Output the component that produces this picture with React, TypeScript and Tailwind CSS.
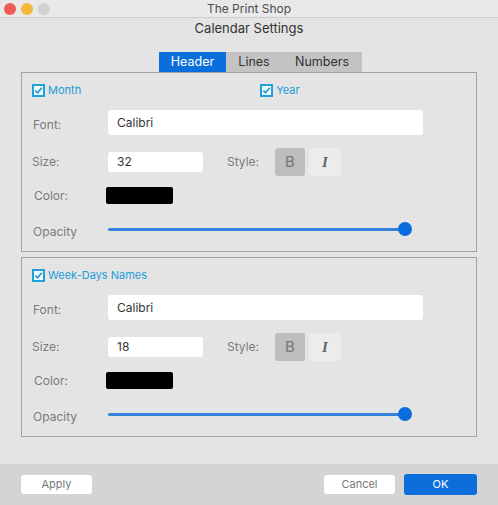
import { useState } from "react";

type Section = {
  id: string;
  checks: { label: string; offset?: string }[];
  font: string;
  size: string;
};

const sections: Section[] = [
  { id: "header", checks: [{ label: "Month" }, { label: "Year", offset: "ml-[179px]" }], font: "Calibri", size: "32" },
  { id: "week", checks: [{ label: "Week-Days Names" }], font: "Calibri", size: "18" },
];

function CheckBox({ label }: { label: string }) {
  return (
    <div className="flex items-center gap-[3px]">
      <div className="w-[13px] h-[13px] border-[2px] border-[#21a0d8] bg-[#f4fbff] flex items-center justify-center">
        <svg width="9" height="9" viewBox="0 0 10 10">
          <path d="M1.5 5.2 L4 7.6 L8.6 2" fill="none" stroke="#1f9ad4" strokeWidth="1.9" />
        </svg>
      </div>
      <span className="text-[11px] text-[#1d9cd6]">{label}</span>
    </div>
  );
}

function SettingsPanel({ section }: { section: Section }) {
  const [bold, setBold] = useState(true);
  return (
    <div className="mx-[21px] h-[180px] border border-[#a2a2a2] flex flex-col">
      <div className="mt-[9px] h-[16px] pl-[10px] flex items-center">
        {section.checks.map((c) => (
          <div key={c.label} className={c.offset}>
            <CheckBox label={c.label} />
          </div>
        ))}
      </div>

      <div className="mt-[12px] h-[25px] pl-[11px] flex items-center">
        <span className="w-[75px] text-[12px] text-[#7b7b7b] pt-[5px]">Font:</span>
        <div className="w-[315px] h-[25px] bg-white rounded-[3px] flex items-center pl-[9px] text-[12px] text-[#333]">
          {section.font}
        </div>
      </div>

      <div className="mt-[13px] h-[28px] pl-[10px] flex items-center">
        <span className="w-[76px] text-[12px] text-[#7b7b7b]">Size:</span>
        <div className="w-[95px] h-[20px] bg-white rounded-[3px] flex items-center pl-[9px] text-[12px] text-[#333]">
          {section.size}
        </div>
        <span className="ml-[24px] w-[48px] text-[12px] text-[#7b7b7b]">Style:</span>
        <button
          onClick={() => setBold(!bold)}
          className={`w-[30px] h-[28px] rounded-[3px] flex items-center justify-center text-[15px] text-[#777] ${bold ? "bg-[#bdbdbd]" : "bg-[#ececec]"}`}
        >
          B
        </button>
        <button className="ml-[4px] w-[32px] h-[28px] rounded-[3px] bg-[#ececec] flex items-center justify-center text-[15px] font-bold italic text-[#666] font-['Liberation_Serif',serif]">
          I
        </button>
      </div>

      <div className="mt-[11px] h-[17px] pl-[12px] flex items-center">
        <span className="w-[72px] text-[12px] text-[#7b7b7b]">Color:</span>
        <div className="w-[67px] h-[17px] bg-black rounded-[2px]" />
      </div>

      <div className="mt-[17px] h-[16px] pl-[11px] flex items-center">
        <span className="w-[75px] text-[12px] text-[#7b7b7b] pt-[5px]">Opacity</span>
        <div className="relative w-[297px] h-[3px] bg-[#3581de] rounded-full">
          <div className="absolute right-[-7px] top-1/2 -translate-y-1/2 w-[14px] h-[14px] rounded-full bg-[#0b6cdc]" />
        </div>
      </div>
    </div>
  );
}

export default function App() {
  const [tab, setTab] = useState("Header");
  const tabs = [
    { name: "Header", w: "w-[67px]" },
    { name: "Lines", w: "w-[56px]" },
    { name: "Numbers", w: "w-[80px]" },
  ];
  return (
    <div className="w-[498px] h-[505px] bg-[#e4e4e4] flex flex-col font-['Inter',sans-serif]">
      <div className="h-[18px] bg-[#e9e9e9] border-b border-[#cdcdcd] flex items-center">
        <div className="w-[60px] flex items-center gap-[5px] pl-[4px]">
          <span className="w-[12px] h-[12px] rounded-full bg-[#ee5b54]" />
          <span className="w-[12px] h-[12px] rounded-full bg-[#f6b73c]" />
          <span className="w-[12px] h-[12px] rounded-full bg-[#d2d2d2]" />
        </div>
        <div className="flex-1 text-center text-[12px] text-[#4c4c4c]">The Print Shop</div>
        <div className="w-[60px]" />
      </div>

      <div className="mt-[1px] h-[18px] leading-[18px] text-center text-[13px] text-[#333]">
        Calendar Settings
      </div>

      <div className="mt-[15px] h-[20px] pl-[159px] flex">
        {tabs.map((t) => (
          <button
            key={t.name}
            onClick={() => setTab(t.name)}
            className={`${t.w} h-[20px] text-[12.5px] flex items-center justify-center ${
              tab === t.name ? "bg-[#0b6fdb] text-white" : "bg-[#c3c3c3] text-[#333]"
            }`}
          >
            {t.name}
          </button>
        ))}
      </div>

      <SettingsPanel section={sections[0]} />
      <div className="mt-[5px]">
        <SettingsPanel section={sections[1]} />
      </div>

      <div className="flex-1" />

      <div className="h-[41px] bg-[#d4d4d4] flex items-center px-[21px] pb-[1px]">
        <button className="w-[71px] h-[19px] bg-white rounded-[3px] text-[11px] text-[#777]">Apply</button>
        <div className="flex-1" />
        <button className="w-[71px] h-[19px] bg-white rounded-[3px] text-[11px] text-[#777]">Cancel</button>
        <button className="ml-[9px] w-[73px] h-[21px] bg-[#0b6edb] rounded-[3px] text-[11px] text-white">OK</button>
      </div>
    </div>
  );
}
